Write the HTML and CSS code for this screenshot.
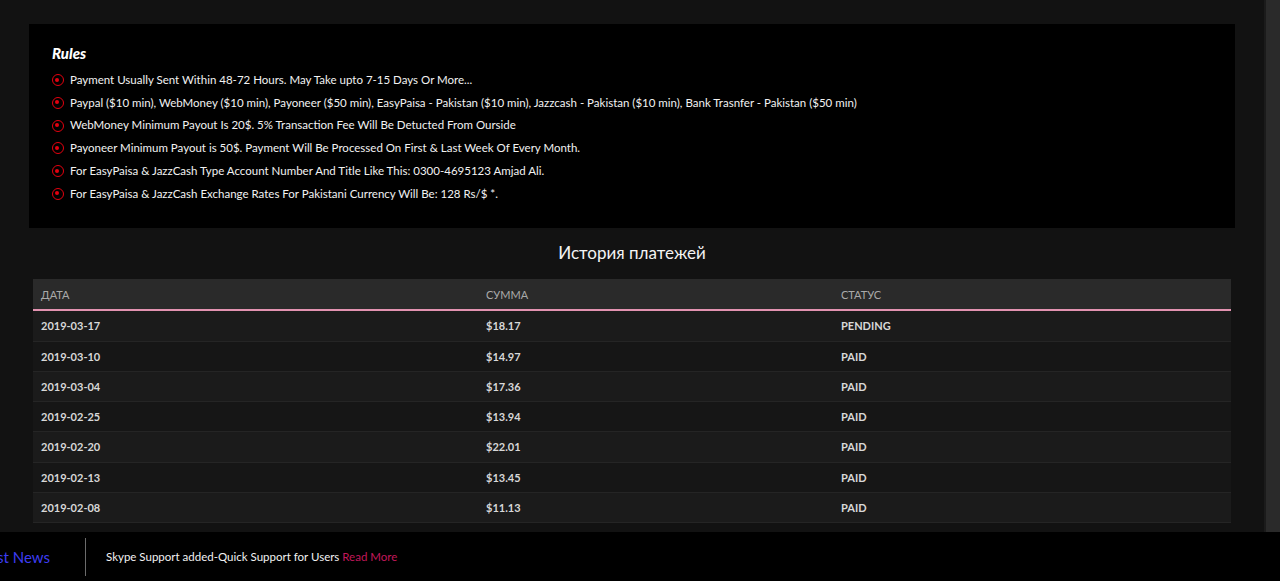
FILE: index.html
```html
<!DOCTYPE html>
<html lang="ru">
  <head>
    <meta charset="utf-8" />
    <meta name="viewport" content="width=device-width,initial-scale=1.0" />
    <title>История платежей</title>
    <link rel="stylesheet" href="styles.css">
  </head>
  <body>
    <div class="screen">
      <div class="frame">
        <div class="main">
          <!-- rules block -->
          <div class="rules">
            <h3 class="rules-title">Rules</h3>
            <ul class="rules-list">
              <li><span class="dot"></span>Payment Usually Sent Within 48-72 Hours. May Take upto 7-15 Days Or More...</li>
              <li><span class="dot"></span>Paypal ($10 min), WebMoney ($10 min), Payoneer ($50 min), EasyPaisa - Pakistan ($10 min), Jazzcash - Pakistan ($10 min), Bank Trasnfer - Pakistan ($50 min)</li>
              <li><span class="dot"></span>WebMoney Minimum Payout Is 20$. 5% Transaction Fee Will Be Detucted From Ourside</li>
              <li><span class="dot"></span>Payoneer Minimum Payout is 50$. Payment Will Be Processed On First &amp; Last Week Of Every Month.</li>
              <li><span class="dot"></span>For EasyPaisa &amp; JazzCash Type Account Number And Title Like This: 0300-4695123 Amjad Ali.</li>
              <li><span class="dot"></span>For EasyPaisa &amp; JazzCash Exchange Rates For Pakistani Currency Will Be: 128 Rs/$ *.</li>
            </ul>
          </div>

          <h2 class="history-title">История платежей</h2>

          <table class="history">
            <thead>
              <tr>
                <th class="col-date">Дата</th>
                <th class="col-sum">Сумма</th>
                <th>Статус</th>
              </tr>
            </thead>
            <tbody>
              <tr><td>2019-03-17</td><td>$18.17</td><td>PENDING</td></tr>
              <tr><td>2019-03-10</td><td>$14.97</td><td>PAID</td></tr>
              <tr><td>2019-03-04</td><td>$17.36</td><td>PAID</td></tr>
              <tr><td>2019-02-25</td><td>$13.94</td><td>PAID</td></tr>
              <tr><td>2019-02-20</td><td>$22.01</td><td>PAID</td></tr>
              <tr><td>2019-02-13</td><td>$13.45</td><td>PAID</td></tr>
              <tr><td>2019-02-08</td><td>$11.13</td><td>PAID</td></tr>
            </tbody>
          </table>
        </div>
        <div class="scroll-track"></div>
      </div>

      <!-- news ticker -->
      <div class="ticker">
        <div class="ticker-label"><span>Latest News</span></div>
        <div class="ticker-text">Skype Support added-Quick Support for Users <a href="#" class="read-more">Read More</a></div>
      </div>
    </div>
  </body>
</html>
```

FILE: styles.css
```css
html, body {
  margin: 0;
  padding: 0;
  height: 100%;
}
body {
  background: #121212;
  color: #fff;
  font-family: Lato, "Open Sans", sans-serif;
  overflow: hidden;
}
.screen {
  display: grid;
  grid-template-rows: 532px 1fr;
  height: 100%;
}
.frame {
  display: flex;
  overflow: hidden;
}
.main {
  flex: 1;
  padding: 24px 29px 0;
}
.scroll-track {
  width: 14px;
  background: #2a2a2a;
  border-left: 2px solid #1b1b1b;
}

/* rules */
.rules {
  background: #000;
  padding: 17px 23px 23px;
}
.rules-title {
  margin: 0 0 4px;
  font-size: 15px;
  line-height: 24px;
  font-style: italic;
  font-weight: 900;
}
.rules-list {
  list-style: none;
  margin: 0;
  padding: 0;
}
.rules-list li {
  display: flex;
  align-items: center;
  font-size: 11.5px;
  line-height: 22.7px;
  color: #f2f2f2;
}
.dot {
  box-sizing: border-box;
  width: 12px;
  height: 12px;
  margin-right: 6px;
  border: 1.6px solid #e4000f;
  border-radius: 50%;
  position: relative;
  flex-shrink: 0;
}
.dot:after {
  content: "";
  position: absolute;
  left: 2.4px;
  top: 2.4px;
  width: 4px;
  height: 4px;
  border-radius: 50%;
  background: #e4000f;
}

.history-title {
  margin: 12px 0 13px;
  text-align: center;
  font-size: 17px;
  line-height: 26px;
  font-weight: 400;
  color: #f4f4f4;
}

/* payment table */
.history {
  width: calc(100% - 8px);
  margin: 0 4px;
  border-collapse: collapse;
  font-size: 11px;
}
.history th {
  background: #2a2a2a;
  color: #a9a9a9;
  font-weight: 400;
  text-transform: uppercase;
  text-align: left;
  padding: 0 8px;
  height: 30px;
  border-bottom: 2px solid #e393b1;
}
.history .col-date {
  width: 429px;
}
.history .col-sum {
  width: 339px;
}
.history td {
  padding: 7px 8px;
  line-height: 15.3px;
  font-weight: 700;
  color: #d8d8d8;
  border-bottom: 1px solid #252525;
}
.history tbody tr:nth-child(odd) {
  background: #1b1b1b;
}
.history tbody tr:nth-child(even) {
  background: #161616;
}

/* ticker */
.ticker {
  background: #000;
  display: flex;
  align-items: center;
}
.ticker-label {
  width: 86px;
  height: 38px;
  display: flex;
  justify-content: flex-end;
  align-items: center;
  overflow: hidden;
  border-right: 1px solid #6b6b6b;
  box-sizing: border-box;
  padding-right: 35px;
}
.ticker-label span {
  white-space: nowrap;
  color: #3d3df2;
  font-size: 15px;
}
.ticker-text {
  padding-left: 20px;
  font-size: 11.5px;
  color: #f2f2f2;
}
.read-more {
  color: #c2185b;
  text-decoration: none;
}
```
